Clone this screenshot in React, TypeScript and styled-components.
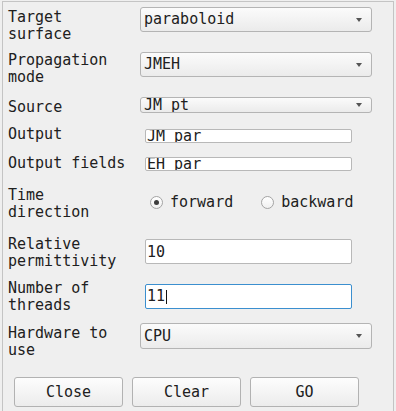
import React from "react";
import styled, { createGlobalStyle } from "styled-components";

const GlobalStyle = createGlobalStyle`
  html, body {
    margin: 0;
    padding: 0;
    background: #efefef;
    overflow: hidden;
  }
  body {
    font-family: "DejaVu Sans Mono", "Liberation Mono", monospace;
    font-size: 15px;
    color: #202020;
  }
`;

const Frame = styled.div`
  box-sizing: border-box;
  margin: 1px 0 0 2px;
  width: 392px;
  height: 410px;
  border: 1px solid #c4c4c4;
  border-bottom: none;
  padding: 5px 0 0 5px;
`;

const Row = styled.div<{ $gap: number; $center?: boolean }>`
  display: flex;
  align-items: ${(p) => (p.$center ? "center" : "flex-start")};
  margin-top: ${(p) => p.$gap}px;
`;

const Label = styled.div`
  width: 132px;
  flex-shrink: 0;
  line-height: 17px;
  padding-top: 2px;
  margin-bottom: -2px;
  white-space: nowrap;
`;

const Field = styled.div<{ $offset?: number; $indent?: number }>`
  margin-top: ${(p) => p.$offset || 0}px;
  margin-left: ${(p) => p.$indent || 0}px;
`;

const Combo = styled.div<{ $h: number }>`
  box-sizing: border-box;
  position: relative;
  width: 232px;
  height: ${(p) => p.$h}px;
  border: 1px solid #b4b4b4;
  border-radius: 3px;
  background: linear-gradient(#fbfbfb, #ebebeb);
  display: flex;
  align-items: center;
  padding-left: 3px;
  line-height: 17px;
  overflow: hidden;
`;

const Arrow = styled.span`
  position: absolute;
  right: 9px;
  top: 50%;
  margin-top: -2px;
  width: 0;
  height: 0;
  border-left: 3.5px solid transparent;
  border-right: 3.5px solid transparent;
  border-top: 4px solid #555;
`;

const Edit = styled.input<{ $h: number }>`
  display: block;
  box-sizing: border-box;
  width: 207px;
  height: ${(p) => p.$h}px;
  border: 1px solid #b8b8b8;
  border-radius: 2px;
  background: #fff;
  padding: 0 1px;
  margin: 0;
  font: inherit;
  line-height: 17px;
  color: #202020;
  outline: none;
`;

const FocusedEdit = styled.div`
  box-sizing: border-box;
  width: 207px;
  height: 25px;
  border: 1px solid #3b8fcf;
  border-radius: 2px;
  background: #fff;
  padding: 0 1px;
  display: flex;
  align-items: center;
  line-height: 17px;
`;

const Caret = styled.span`
  display: inline-block;
  width: 1px;
  height: 14px;
  background: #111;
  margin-left: 1px;
`;

const RadioGroup = styled.div`
  display: flex;
  align-items: center;
  gap: 28px;
  margin-left: 10px;
`;

const RadioOption = styled.label`
  display: flex;
  align-items: center;
  gap: 7px;
  line-height: 17px;
`;

const RadioCircle = styled.span<{ $checked?: boolean }>`
  box-sizing: border-box;
  width: 13px;
  height: 13px;
  border-radius: 50%;
  border: 1px solid #a4a4a4;
  background: linear-gradient(#ffffff, #f0f0f0);
  display: flex;
  align-items: center;
  justify-content: center;
  &::after {
    content: "";
    display: ${(p) => (p.$checked ? "block" : "none")};
    width: 5px;
    height: 5px;
    border-radius: 50%;
    background: #3c3c3c;
  }
`;

const ButtonBar = styled.div`
  display: flex;
  gap: 9px;
  margin-top: 20px;
  margin-left: 6px;
`;

const Button = styled.button`
  box-sizing: border-box;
  width: 109px;
  height: 30px;
  border: 1px solid #b2b2b2;
  border-radius: 3px;
  background: linear-gradient(#fdfdfd, #ececec);
  font: inherit;
  color: #202020;
  padding: 0;
`;

export default function App() {
  return (
    <>
      <GlobalStyle />
      <Frame>
        <Row $gap={0}>
          <Label>
            Target
            <br />
            surface
          </Label>
          <Field>
            <Combo $h={25}>
              paraboloid
              <Arrow />
            </Combo>
          </Field>
        </Row>
        <Row $gap={9}>
          <Label>
            Propagation
            <br />
            mode
          </Label>
          <Field $offset={2}>
            <Combo $h={25}>
              JMEH
              <Arrow />
            </Combo>
          </Field>
        </Row>
        <Row $gap={13}>
          <Label>Source</Label>
          <Field>
            <Combo $h={16}>
              JM pt
              <Arrow />
            </Combo>
          </Field>
        </Row>
        <Row $gap={10}>
          <Label>Output</Label>
          <Field $offset={5} $indent={5}>
            <Edit $h={14} defaultValue="JM par" />
          </Field>
        </Row>
        <Row $gap={10}>
          <Label>Output fields</Label>
          <Field $offset={4} $indent={5}>
            <Edit $h={14} defaultValue="EH par" />
          </Field>
        </Row>
        <Row $gap={14} $center>
          <Label>
            Time
            <br />
            direction
          </Label>
          <RadioGroup>
            <RadioOption>
              <RadioCircle $checked />
              forward
            </RadioOption>
            <RadioOption>
              <RadioCircle />
              backward
            </RadioOption>
          </RadioGroup>
        </Row>
        <Row $gap={15}>
          <Label>
            Relative
            <br />
            permittivity
          </Label>
          <Field $offset={5} $indent={5}>
            <Edit $h={25} defaultValue="10" />
          </Field>
        </Row>
        <Row $gap={10}>
          <Label>
            Number of
            <br />
            threads
          </Label>
          <Field $offset={6} $indent={5}>
            <FocusedEdit>
              11
              <Caret />
            </FocusedEdit>
          </Field>
        </Row>
        <Row $gap={11}>
          <Label>
            Hardware to
            <br />
            use
          </Label>
          <Field>
            <Combo $h={26}>
              CPU
              <Arrow />
            </Combo>
          </Field>
        </Row>
        <ButtonBar>
          <Button>Close</Button>
          <Button>Clear</Button>
          <Button>GO</Button>
        </ButtonBar>
      </Frame>
    </>
  );
}
